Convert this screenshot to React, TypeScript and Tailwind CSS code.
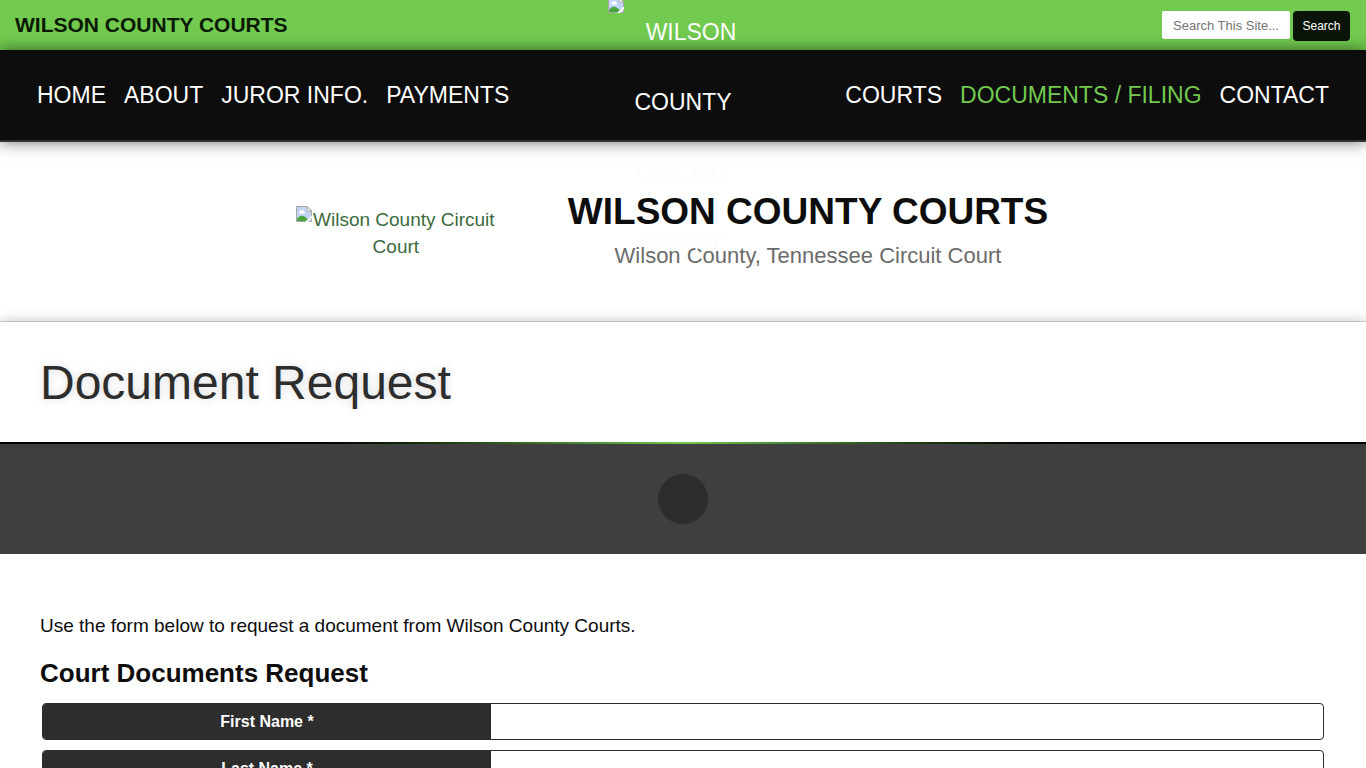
import React from "react";

const leftLinks = ["Home", "About", "Juror Info.", "Payments"];
const rightLinks = ["Courts", "Documents / Filing", "Contact"];
const fields = [
  { id: "first-name", label: "First Name *" },
  { id: "last-name", label: "Last Name *" },
];

function MissingImage() {
  return (
    <svg viewBox="0 0 16 16" className="float-left h-4 w-4" aria-hidden="true">
      <path d="M0.5 0.5H11L15.5 5V15.5H0.5Z" fill="#c3d4f7" stroke="#a6a6a6" />
      <path d="M11 0.5V5H15.5Z" fill="#ffffff" stroke="#a6a6a6" />
      <path d="M3 6.5a1.5 1.5 0 0 1 1.6-1.600a2 2 0 0 1 3.6.6a1.2 1.2 0 0 1 .3 2H3.6Z" fill="#ffffff" />
      <path d="M1 15V13C3 9.500 7 8.500 10 11.500L13 15Z" fill="#4aa53c" />
      <path d="M9 16L16 9.500V12L12 16Z" fill="#ffffff" />
    </svg>
  );
}

function NavLinks({ items, active }: { items: string[]; active?: string }) {
  return (
    <ul className="flex gap-[18px]">
      {items.map((item) => (
        <li key={item}>
          <a
            href="#"
            aria-current={item === active ? "page" : undefined}
            className={item === active ? "text-[#72c94f]" : "text-white"}
          >
            {item}
          </a>
        </li>
      ))}
    </ul>
  );
}

export default function App() {
  return (
    <div className="h-screen overflow-hidden bg-white font-['Liberation_Sans',Arial,sans-serif] text-[#0d0d0d]">
      <header className="relative z-10">
        <div className="flex h-[50px] items-center justify-between bg-[#72cb4f] pr-4 pl-[15px]">
          <p className="text-[21px] font-bold text-[#0a1a05] uppercase">Wilson County Courts</p>
          <form className="mt-0.5 flex items-start gap-[3px]" onSubmit={(e) => e.preventDefault()}>
            <input
              type="text"
              aria-label="Search This Site"
              placeholder="Search This Site..."
              className="h-7 w-32 rounded-xs bg-white px-[11px] text-[13px] placeholder:text-[#757575]"
            />
            <button type="submit" className="h-[30px] w-[57px] rounded-sm bg-[#0a1408] text-xs text-white">
              Search
            </button>
          </form>
        </div>
        <nav className="relative flex h-[92px] items-center justify-between border-b-2 border-[#333] bg-[#0d0d0d] px-[37px] text-[23px] uppercase shadow-[0_0_15px_#00000090]">
          <NavLinks items={leftLinks} />
          <NavLinks items={rightLinks} active="Documents / Filing" />
        </nav>
        <a
          href="#"
          className="absolute -top-[3px] left-1/2 w-[150px] -translate-x-1/2 text-center text-[23px] leading-[70px] text-[#fdfdfd] uppercase"
        >
          <MissingImage />
          Wilson County Circuit Court
        </a>
      </header>

      <section className="flex h-[180px] items-center justify-center gap-[72px] border-b border-[#d9d9d9] pt-0.5 pr-[22px]">
        <a href="#" className="w-[200px] text-center text-[19px] leading-[27px] text-[#3c6a3c]">
          <MissingImage />
          Wilson County Circuit Court
        </a>
        <div className="pt-0.5 text-center">
          <h2 className="text-[37px] leading-[44px] font-bold uppercase">Wilson County Courts</h2>
          <p className="text-[22px] leading-[44px] text-[#6b6b6b]">Wilson County, Tennessee Circuit Court</p>
        </div>
      </section>

      <section className="bg-white px-10 pt-[33px] pb-[31px] shadow-[0_0_12px_#00000045]">
        <h1 className="text-5xl leading-14 text-[#2d2d2d] [text-shadow:0_0_10px_#00000028]">Document Request</h1>
      </section>
      <div className="relative h-0.5 bg-linear-to-r from-black from-20% via-[#72c94f] to-black to-80%" />
      <div className="relative flex h-[110px] items-center justify-center bg-[#3f3f3f]">
        <span className="size-[50px] rounded-full bg-[#2d2d2d]" />
      </div>

      <main className="px-10 pt-[58px]">
        <p className="text-[19px] leading-7">Use the form below to request a document from Wilson County Courts.</p>
        <h2 className="mt-[15px] text-[26px] leading-9 font-bold">Court Documents Request</h2>
        <form className="mx-0.5 mt-3 flex flex-col gap-2.5">
          {fields.map((field) => (
            <div key={field.id} className="flex h-[37px] overflow-hidden rounded-sm border border-[#2d2d2d]">
              <label
                htmlFor={field.id}
                className="flex w-[35%] items-center justify-center bg-[#2d2d2d] font-bold text-white"
              >
                {field.label}
              </label>
              <input id={field.id} type="text" className="min-w-0 flex-1 px-2 outline-none" />
            </div>
          ))}
        </form>
      </main>
    </div>
  );
}
